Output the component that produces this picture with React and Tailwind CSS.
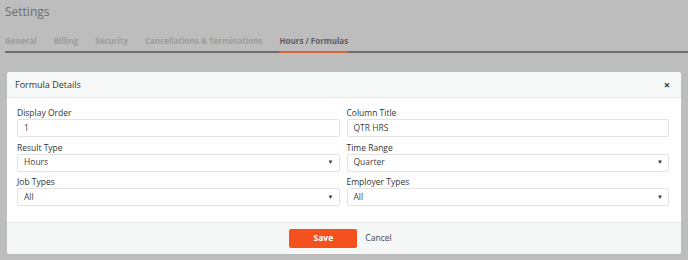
const tabs = ["General", "Billing", "Security", "Cancellations & Terminations", "Hours / Formulas"]

const Field = ({ label, value, select }) => (
  <div className="flex flex-col">
    <label className="text-[8.5px] leading-[10px] text-[#333] mb-[1px]">{label}</label>
    <div className="h-[18px] border border-[#e3e3e3] rounded-[2px] bg-white flex items-center justify-between pl-[6px] pr-[5px]">
      <span className="text-[8.5px] text-[#444]">{value}</span>
      {select && <span className="text-[6px] text-[#333]">▼</span>}
    </div>
  </div>
)

const App = () => {
  return (
    <div
      className="w-[688px] h-[260px] bg-[#bdbdbd] overflow-hidden"
      style={{ fontFamily: "'Open Sans', 'Liberation Sans', sans-serif" }}
    >
      <div className="pl-[5px] pt-[4px]">
        <h1 className="text-[12px] leading-[16px] text-[#6e6e6e]">Settings</h1>
        <div className="flex gap-[17px] mt-[15px] border-b-2 border-[#6a6e6e]">
          {tabs.map((t) => (
            <div
              key={t}
              className={`text-[8px] font-bold pb-[4px] -mb-[2px] border-b-2 ${
                t === "Hours / Formulas" ? "text-[#5c5e60] border-[#e0603a]" : "text-[#9a9c9c] border-transparent"
              }`}
            >
              {t}
            </div>
          ))}
        </div>
      </div>

      <div className="mt-[19px] ml-[7px] w-[674px] bg-white rounded-[3px] overflow-hidden">
        <div className="h-[26px] bg-[#f7f9f9] border-b border-[#e6e9e9] flex items-center justify-between pl-[8px] pr-[11px]">
          <span className="text-[9px] text-[#333]">Formula Details</span>
          <span className="text-[11px] font-bold text-[#333] leading-none">×</span>
        </div>
        <div className="pl-[10px] pr-[12px] pt-[10px] pb-[16px] grid grid-cols-2 gap-x-[7px] gap-y-[5.5px]">
          <Field label="Display Order" value="1" />
          <Field label="Column Title" value="QTR HRS" />
          <Field label="Result Type" value="Hours" select />
          <Field label="Time Range" value="Quarter" select />
          <Field label="Job Types" value="All" select />
          <Field label="Employer Types" value="All" select />
        </div>
        <div className="h-[32px] bg-[#f6f8f8] border-t border-[#e6e9e9] flex items-center justify-center gap-[8px] pr-[7px]">
          <button className="w-[68px] h-[19px] bg-[#f4511e] rounded-[2px] text-white text-[8.5px] font-bold">Save</button>
          <button className="text-[8.5px] text-[#444]">Cancel</button>
        </div>
      </div>
    </div>
  )
}

export default App
